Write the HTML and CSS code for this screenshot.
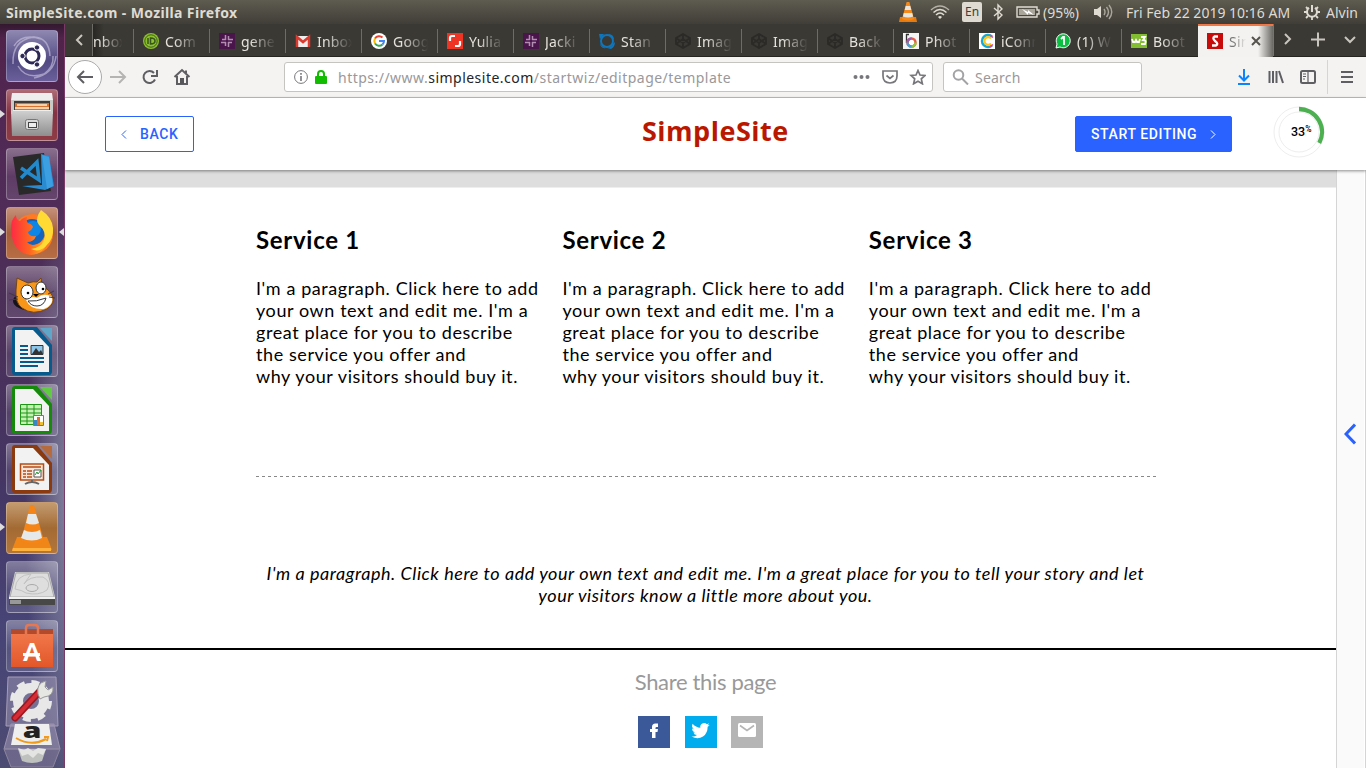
FILE: index.html
```html
<!DOCTYPE html>
<html lang="en">
<head>
<meta charset="utf-8">
<title>SimpleSite.com</title>
<link rel="stylesheet" href="styles.css">
</head>
<body>
<header class="topbar">
  <span class="wintitle">SimpleSite.com - Mozilla Firefox</span>
  <div class="tray">
    <svg class="t-vlc" width="20" height="22" viewBox="0 0 20 22"><path d="M2 16h16l1 5H1z" fill="#e87a0c"/><path d="M8.6 1h2.8L16 18q-6 3-12 0z" fill="#f58a1b"/><path d="M7.700 5h4.600l1 4H6.700zM5.800 12h8.400l.9 3.500q-5 2-10.200 0z" fill="#e9e6df"/></svg>
    <svg class="t-wifi" width="20" height="16" viewBox="0 0 20 16" fill="none" stroke="#dfdbd2" stroke-width="1.500"><path d="M1 6q9-8 18 0" stroke="#b5b1a8"/><path d="M3.500 8.500q6.500-6 13 0M6 11q4-4 8 0"/><path d="M8 13q2-2 4 0l-2 2z" fill="#dfdbd2" stroke="none"/></svg>
    <span class="lang">En</span>
    <svg class="t-bt" width="10" height="18" viewBox="0 0 10 18" fill="none" stroke="#dfdbd2" stroke-width="1.400"><path d="M1 5l8 7-4 4V2l4 4-8 7"/></svg>
    <svg class="t-bat" width="24" height="12" viewBox="0 0 24 12"><path d="M1 1h20v3h2v4h-2v3H1z" fill="none" stroke="#dfdbd2" stroke-width="1.400"/><path d="M3 3h16v6H3z" fill="#aaa69c"/><path d="M6 3l6 3V4l6 5-6-2v2z" fill="#fff"/></svg>
    <span class="pct">(95%)</span>
    <svg class="t-vol" width="20" height="16" viewBox="0 0 20 16"><path d="M1 5h3l4-3v12l-4-3H1z" fill="#dfdbd2"/><path d="M11 5q2 3 0 6M13.500 3q4 5 0 10M16 1q5.500 7 0 14" fill="none" stroke="#aaa69c" stroke-width="1.400"/></svg>
    <span class="clock">Fri Feb 22 2019 10:16 AM</span>
    <svg class="t-gear" width="16" height="16" viewBox="0 0 16 16" fill="none" stroke="#dfdbd2"><path d="M5 3.800a5 5 0 1 0 6 0" stroke-width="2"/><path d="M8 1v7" stroke-width="2"/><path d="M2 3l2 2M14 3l-2 2M0 8h3M13 8h3M2 14l2-2M14 14l-2-2M8 13v3" stroke-width="1.800"/></svg>
    <span class="user">Alvin</span>
  </div>
</header>
<div class="desktop">
<nav class="launcher">
  <div class="tile ubuntu"><svg viewBox="0 0 52 52"><g fill="none" stroke="#c6c0dc" stroke-width="1.500" opacity=".65"><path d="M7 34Q6 10 28 7q15 1 16 19M8 16q8-13 27-7M12 36q8 14 26 8 10-7 9-18M28 48q20-4 22-22"/></g><circle cx="26" cy="26" r="14" fill="#fff"/><circle cx="26" cy="26" r="7" fill="none" stroke="#2d2856" stroke-width="3"/><g fill="#2d2856" stroke="#fff"><circle cx="16.500" cy="26" r="2.700"/><circle cx="31" cy="17.500" r="2.700"/><circle cx="31" cy="34.500" r="2.700"/></g></svg></div>
  <div class="tile files"><svg viewBox="0 0 52 52"><path d="M6 4h40l1 7H5z" fill="#eee"/><path d="M5 11h42v14H5z" fill="#c9c9c7"/><path d="M8 12h36v10H8z" fill="#403b36"/><path d="M9 14h34v8H9z" fill="#d77230"/><path d="M11 15h30v2H11zM9 18h34v2H9z" fill="#f6d0a8"/><path d="M7 21h38v4H7z" fill="#eee"/><path d="M5 22h42l-1 25H6z" fill="url(#metal)"/><rect x="19.500" y="30.500" width="13" height="10" rx="2" fill="#d9d9d9" stroke="#777"/><rect x="22.500" y="33.500" width="8" height="5" fill="#eee" stroke="#444"/></svg></div>
  <div class="tile"><svg viewBox="0 0 52 52"><path d="M7 9l31-4 7 38-32 4z" fill="#292929"/><path d="M35 6l8 2 5 30-9 4-23-4 20-1z" fill="#2b8bd1"/><path d="M36 7l7 2 4 29-6 3z" fill="#3c9fe2"/><path d="M15 20l18 12-2-18-16 16" fill="none" stroke="#2489ca" stroke-width="3.500"/></svg></div>
  <div class="tile firefox"><svg viewBox="0 0 52 52"><circle cx="27" cy="27" r="20" fill="#ff7a22"/><circle cx="26" cy="25" r="13" fill="#1464bd"/><circle cx="27" cy="22" r="8" fill="#0d86e8"/><path d="M5 22Q5 12 10 8q0 5 4 6 2-3 7-4-1 4 1 6 4 1 5 4-1 3-5 5 1 5 8 4-2 6-9 6 5 6 13 1 8-5 5-16 5 8 3 14-4 13-17 14Q6 46 5 22z" fill="url(#flame)"/><path d="M35 3q-7 9-2 15 8 7 5 15-3 8-13 9 8 4 15-3 8-7 7-18-1-11-12-18z" fill="#ffda35"/></svg></div>
  <div class="tile"><svg viewBox="0 0 52 52"><g transform="translate(-2 1)"><ellipse cx="29" cy="34" rx="20" ry="10" fill="#17131c"/><path d="M13 11l11 5q6-2 9-1l4-4 1 8q7 3 10 9 4 8-5 14-14 7-25-1-7-5-6-18z" fill="#f79618" stroke="#70451e"/><path d="M22 33q6-5 11-2 7-6 15-1 2 8-8 12-14 1-18-9z" fill="#fff"/><ellipse cx="23" cy="25" rx="6" ry="7" fill="#fff" stroke="#333"/><ellipse cx="37" cy="21" rx="5" ry="6" fill="#fff" stroke="#333"/><circle cx="24" cy="26" r="1.300"/><circle cx="39" cy="22" r="1.300"/><path d="M29 27h6l-3 3z"/><path d="M24 34q8 1 18-3-2 8-9 8-6 0-9-5z" fill="#fff" stroke="#333"/><path d="M5 26l9 4M5 33l9-1M50 24l-6 3M51 31l-6-1" stroke="#423a45"/></g></svg></div>
  <div class="tile"><svg viewBox="0 0 52 52"><path d="M9 2h22l15 18v26q0 4-3 4H9q-3 0-3-3V5q0-3 3-3z" fill="#075a8c"/><path d="M9 5h18l16 17v25H9z" fill="#f2f2f2"/><path d="M34 3h12v13z" fill="#5fa6c9"/><path d="M14 21h8M14 25h8M14 29h8M14 33h24M14 37h24M14 41h18" stroke="#075a8c" stroke-width="2"/><path d="M25 20.500h12v9H25z" fill="#8bc5e9" stroke="#333"/><path d="M26 29l4-6 3 4 2-2 2 4z" fill="#333"/></svg></div>
  <div class="tile"><svg viewBox="0 0 52 52"><path d="M9 2h22l15 18v26q0 4-3 4H9q-3 0-3-3V5q0-3 3-3z" fill="#158a0a"/><path d="M9 5h18l16 17v25H9z" fill="#f2f2f2"/><path d="M34 3h12v13z" fill="#60ca43"/><path d="M14.500 20.500h21v20h-21zM14.500 25h21M14.500 29h21M14.500 33h21M14.500 37h21M21 20v20M28 20v20" fill="#c5f2b3" stroke="#1d9614"/><path d="M27.500 31.500h10v10h-10z" fill="#fff" stroke="#777"/><path d="M28 36h3v5h-3z" fill="#3887c2"/><path d="M31 33h3v8h-3z" fill="#e36d2d"/><path d="M34 38h3v3h-3z" fill="#ecc035"/></svg></div>
  <div class="tile"><svg viewBox="0 0 52 52"><path d="M9 2h22l15 18v26q0 4-3 4H9q-3 0-3-3V5q0-3 3-3z" fill="#8b3a10"/><path d="M9 5h18l16 17v25H9z" fill="#f2f2f2"/><path d="M34 3h12v13z" fill="#b56b3d"/><path d="M14.500 21h23v16h-23z" fill="#f8e5d8" stroke="#b44e16" stroke-width="1.500"/><path d="M17 24h18M17 28h3M21 28h5M17 31h3M21 31h5M17 34h3M21 34h5" stroke="#b44e16" stroke-width="1.500"/><path d="M28 27h7v7h-7z" fill="#fff" stroke="#555"/><path d="M29 32l2-3 1 2 3-4" fill="none" stroke="#239b34"/><path d="M26 37v3m-7 1q7-4 14 0" fill="none" stroke="#666" stroke-width="2"/></svg></div>
  <div class="tile vlc"><svg viewBox="0 0 52 52"><path d="M11 35h30l5 13H6z" fill="#ef8617"/><path d="M7 46h38v3H6z" fill="#ffb33e"/><path d="M24 3h4l10 36q-11 6-23 0z" fill="#f48516"/><path d="M22 12h8l3 9q-6 3-13 0zM18 28q8 4 16 0l2 8q-10 5-21 0z" fill="#e5e9e9"/></svg></div>
  <div class="tile"><svg viewBox="0 0 52 52"><path d="M9 11h34l6 25v8H3v-8z" fill="#cecece"/><path d="M10 12h32l6 24H4z" fill="#dedede" stroke="#aaa"/><path d="M3 36h46v8H3z" fill="#484848"/><path d="M3 36h46v2H3z" fill="#f1f1f1"/><path d="M4 39h11v4H4z" fill="#999"/><path d="M9 28q1-14 16-15-5 7-7 10 5-8 19-7 9 5 4 13-8 6-21 3-4-3-11-4z" fill="none" stroke="#c2c2c2"/><ellipse cx="26" cy="27" rx="6" ry="3.500" fill="#ddd" stroke="#aaa"/></svg></div>
  <div class="tile"><svg viewBox="0 0 52 52"><path d="M5 9h42v5H5z" fill="#b34a2c"/><path d="M5 14h42v33H5z" fill="url(#bag)"/><path d="M20 17V8q0-3 3-3h6q3 0 3 3v9" fill="none" stroke="#e77751" stroke-width="2.500"/><text x="26" y="41" text-anchor="middle" class="bagletter">A</text><path d="M17 34.500h17" stroke="#fff" stroke-width="3"/></svg></div>
  <svg class="stack" width="65" height="96" viewBox="0 0 65 96"><path d="M8 5h48l2 49H6z" fill="#b6aec8" fill-opacity=".4" stroke="#a69db7"/><circle cx="31" cy="29" r="13" fill="none" stroke="#e7e8e7" stroke-width="10"/><circle cx="31" cy="29" r="19" fill="none" stroke="#e7e8e7" stroke-width="4" stroke-dasharray="8 6.900"/><path d="M15 46l25-27" stroke="#9d1820" stroke-width="7" stroke-linecap="round"/><path d="M15 46l24-26" stroke="#d52c35" stroke-width="4" stroke-linecap="round"/><path d="M38 22q-2-11 8-13l-1 6 3 3 5-3q1 9-9 10l-4 2z" fill="#e6e6e3" stroke="#999"/><path d="M11 52h43l6 25H4z" fill="#aaa0bc" fill-opacity=".5" stroke="#9b93ae"/><path d="M15 52h34l3 21H11z" fill="#eee"/><text transform="translate(32 66) scale(1.200 .85)" text-anchor="middle" class="amazon">a</text><path d="M16 66q15 9 30 1m-2-2l4 0-1 4" fill="none" stroke="#f29a1c" stroke-width="2"/><path d="M4 77h56l-7 18H11z" fill="#8b819f" fill-opacity=".5" stroke="#8d859c"/><path d="M18 77h28l-4 12q-10 4-20 0z" fill="#bfc1bf"/><path d="M18 76l6 2 4-2 5 3 5-3 8 1-3 6-5-2-5 5-5-4-6 2z" fill="#e4e4e2"/></svg>
  <i class="run r1"></i><i class="run r2"></i><i class="run r3"></i><i class="focus"></i>
</nav>
<div class="browser">
  <div class="tabs">
    <div class="scroll"><svg width="8" height="12" viewBox="0 0 8 12"><path d="M7 1L2 6l5 5"/></svg></div>
    <div class="tab clipped"><span class="label">nbox</span></div>
    <div class="tab"><svg class="fav" viewBox="0 0 16 16"><circle cx="8" cy="8" r="8" fill="#8dbf2e"/><circle cx="8" cy="8" r="6.200" fill="none" stroke="#3c611a"/><path d="M5 5v6M7.500 5v6q4.500 0 4.500-3T7.500 5z" fill="none" stroke="#36561b" stroke-width="1.500"/></svg><span class="label">Com</span></div>
    <div class="tab"><svg class="fav" viewBox="0 0 16 16"><path d="M0 0h16v16H0z" fill="#4a154b"/><path d="M6.500 2v5M9.500 9v5M2 9.500h5M9 6.500h5M6.500 9v4M9.500 3v4M3 6.500h4M9 9.500h4" stroke="#b48eb2" stroke-width="1.500"/></svg><span class="label">gene</span></div>
    <div class="tab"><svg class="fav" viewBox="0 0 16 16"><path d="M1 3h14v11H1z" fill="#eee"/><path d="M2 14V4l6 5 6-5v10" fill="none" stroke="#d93b30" stroke-width="2.500"/></svg><span class="label">Inbox</span></div>
    <div class="tab"><svg class="fav" viewBox="0 0 16 16"><circle cx="8" cy="8" r="8" fill="#fff"/><g fill="none" stroke-width="2"><path d="M4 5.500A5 5 0 0 1 11.500 4.500" stroke="#ea4335"/><path d="M4 10.500a5 5 0 0 1 0-5" stroke="#fbbc05"/><path d="M4 10.500a5 5 0 0 0 7.500 1" stroke="#34a853"/><path d="M11.500 11.500Q13 10 13 8H8" stroke="#4285f4"/></g></svg><span class="label">Goog</span></div>
    <div class="tab"><svg class="fav" viewBox="0 0 16 16"><path d="M0 0h16v16H0z" fill="#ee3424"/><path d="M3 8V5q0-2 2-2h3M8 13h3q2 0 2-2V8" fill="none" stroke="#fff" stroke-width="2.200"/></svg><span class="label">Yulia</span></div>
    <div class="tab"><svg class="fav" viewBox="0 0 16 16"><path d="M0 0h16v16H0z" fill="#4a154b"/><path d="M6.500 2v5M9.500 9v5M2 9.500h5M9 6.500h5M6.500 9v4M9.500 3v4M3 6.500h4M9 9.500h4" stroke="#b48eb2" stroke-width="1.500"/></svg><span class="label">Jacki</span></div>
    <div class="tab"><svg class="fav" viewBox="0 0 16 16"><circle cx="8" cy="8" r="6" fill="none" stroke="#0e76bd" stroke-width="2"/><path d="M0 1h5L1 6zM9 1q6 0 6 6l-4-4zM16 9q0 5-4 7l-4-1q5-1 6-4zM1 9q0 4 6 6-6 1-6-6z" fill="#0e76bd"/></svg><span class="label">Stan</span></div>
    <div class="tab"><svg class="fav dark" viewBox="0 0 16 16"><path d="M8 1l7 4v6l-7 4-7-4V5zM1 5l7 5 7-5M1 11l7-5 7 5M8 1v5M8 10v5"/></svg><span class="label">Imag</span></div>
    <div class="tab"><svg class="fav dark" viewBox="0 0 16 16"><path d="M8 1l7 4v6l-7 4-7-4V5zM1 5l7 5 7-5M1 11l7-5 7 5M8 1v5M8 10v5"/></svg><span class="label">Imag</span></div>
    <div class="tab"><svg class="fav dark" viewBox="0 0 16 16"><path d="M8 1l7 4v6l-7 4-7-4V5zM1 5l7 5 7-5M1 11l7-5 7 5M8 1v5M8 10v5"/></svg><span class="label">Back</span></div>
    <div class="tab"><svg class="fav" viewBox="0 0 16 16"><path d="M0 0h16v16H0z" fill="#f4f4f4"/><path d="M3.500 1v9M3 1.500h3" stroke="#333" stroke-width="1.300"/><circle cx="8.500" cy="9.500" r="4" fill="#fff" stroke="#e85c47" stroke-width="2.500"/><path d="M4.500 9.500a4 4 0 0 1 4-4" fill="none" stroke="#975fb2" stroke-width="2.500"/><path d="M4.500 9.500a4 4 0 0 0 4 4" fill="none" stroke="#42a0d4" stroke-width="2.500"/><path d="M8.500 13.500a4 4 0 0 0 4-4" fill="none" stroke="#8dc63f" stroke-width="2.500"/></svg><span class="label">Phot</span></div>
    <div class="tab"><svg class="fav" viewBox="0 0 16 16"><path d="M0 0h16v16H0z" fill="#fff"/><path d="M13 3.500A6 6 0 1 0 13 12.500" fill="none" stroke="#15a8d4" stroke-width="2.500"/><path d="M12 5.500a3.800 3.800 0 1 0 0 5" fill="none" stroke="#ffc51b" stroke-width="2.200"/><path d="M11 2l3 2.500M11 14l3-2.500" stroke="#dd478f" stroke-width="1.500"/></svg><span class="label">iConn</span></div>
    <div class="tab"><svg class="fav" viewBox="0 0 16 16"><path d="M1 15l1-4a7 7 0 1 1 3 3z" fill="#0abf42" stroke="#fff"/><path d="M6 6l2-2h1v8" fill="none" stroke="#fff" stroke-width="1.800"/></svg><span class="label">(1) W</span></div>
    <div class="tab"><svg class="fav" viewBox="0 0 16 16"><path d="M0 1h16v14H0z" fill="#83be31"/><path d="M1 6l1 3h2l1-2 1 2h2l1-3M10 4h4l-2 3q4 0 2 4h-4" fill="none" stroke="#fff" stroke-width="1.800"/></svg><span class="label">Boot</span></div>
    <div class="tab active"><svg class="fav" viewBox="0 0 16 16"><path d="M0 0h16v16H0z" fill="#c70b0b"/><path d="M11 3.500H7.500Q5 5 8 8q4 3 1 4.500H5" fill="none" stroke="#fff" stroke-width="2.300"/></svg><span class="label">Sim</span><svg class="close" width="10" height="10" viewBox="0 0 10 10"><path d="M1 1l8 8M9 1L1 9"/></svg></div>
    <div class="tabctl"><svg viewBox="0 0 70 20" width="70" height="20"><path d="M2 4l5 5-5 5M28 9.500h14M35 2.500v14M62 7l5 5 5-5"/></svg></div>
  </div>
  <div class="toolbar">
    <div class="backbtn"><svg width="18" height="16" viewBox="0 0 18 16"><path d="M17 8H2M8 2L2 8l6 6"/></svg></div>
    <svg class="fwd" width="18" height="16" viewBox="0 0 18 16"><path d="M1 8h15M10 2l6 6-6 6"/></svg>
    <svg class="reload" width="16" height="16" viewBox="0 0 16 16"><path d="M13 10.500A6 6 0 1 1 12 4M15 1v6H9"/></svg>
    <svg class="home" width="18" height="18" viewBox="0 0 18 18"><path d="M1.500 9L9 2l7.500 7M4 8v8h10V8M13 2.500V5"/><path d="M7 10h4v6H7z" fill="#57565a" stroke="none"/></svg>
    <div class="urlbar">
      <svg class="info" width="14" height="14" viewBox="0 0 14 14"><circle cx="7" cy="7" r="6.400"/><path d="M7 6v5M7 3v1.800" stroke-width="1.600"/></svg>
      <svg class="lock" width="12" height="14" viewBox="0 0 12 14"><path d="M3 7V4q0-3 3-3t3 3v3" fill="none" stroke="#12bc00" stroke-width="2"/><rect y="6" width="12" height="8" rx="1" fill="#12bc00"/></svg>
      <span class="url">https://www.<b>simplesite.com</b>/startwiz/editpage/template</span>
      <svg class="urlicons" width="74" height="16" viewBox="0 0 74 16"><g class="dots"><circle cx="3.500" cy="8" r="2"/><circle cx="9.500" cy="8" r="2"/><circle cx="15.500" cy="8" r="2"/></g><path d="M31 2h14v5q0 6.500-7 7-7-.5-7-7zM34.500 6.500l3.500 3 3.500-3"/><path d="M66 1.500l2 4.500 5 .5-3.700 3.400 1.100 4.900-4.400-2.500-4.400 2.500 1.100-4.900L59 6.500l5-.5z"/></svg>
    </div>
    <div class="search"><svg width="17" height="16" viewBox="0 0 17 16"><circle cx="6.500" cy="6" r="4.800"/><path d="M10 9.500l6 6"/></svg><span>Search</span></div>
    <div class="actions">
      <svg width="14" height="16" viewBox="0 0 14 16"><path d="M7 0v11M2 6.500l5 5 5-5M1 15h12"/></svg>
      <svg width="16" height="16" viewBox="0 0 16 16"><path d="M1.500 2v12M5 2v12M8.500 2v12M11 2l4 12"/></svg>
      <svg width="16" height="14" viewBox="0 0 16 14"><rect x="1" y="1" width="14" height="12" rx="1.500"/><path d="M8 1v12M3 4h3M3 6.500h3M3 9h2" stroke-width="1.200"/></svg>
    </div>
    <div class="menu"><svg width="12" height="12" viewBox="0 0 12 12"><path d="M0 1h12M0 6h12M0 11h12"/></svg></div>
  </div>
  <div class="sitebar">
    <a class="btn back"><svg width="6" height="9" viewBox="0 0 6 9"><path d="M5 .5l-4 4 4 4"/></svg><span>BACK</span></a>
    <div class="logo">SimpleSite</div>
    <a class="btn start"><span>START EDITING</span><svg width="6" height="9" viewBox="0 0 6 9"><path d="M1 .5l4 4-4 4"/></svg></a>
    <div class="progress"><svg width="52" height="52" viewBox="0 0 52 52"><circle cx="26" cy="26" r="25" fill="none" stroke="#eee"/><circle cx="26" cy="26" r="20" fill="none" stroke="#eee"/><path d="M26 3A23 23 0 0 1 46.200 37" fill="none" stroke="#4caf50" stroke-width="4.300"/></svg><span class="num">33<sup>%</sup></span></div>
  </div>
  <div class="work">
    <main class="canvas">
      <div class="band"></div>
      <section class="services">
        <article><h2>Service 1</h2><p>I'm a paragraph. Click here to add<br>your own text and edit me. I'm a<br>great place for you to describe<br>the service you offer and<br>why your visitors should buy it.</p></article>
        <article><h2>Service 2</h2><p>I'm a paragraph. Click here to add<br>your own text and edit me. I'm a<br>great place for you to describe<br>the service you offer and<br>why your visitors should buy it.</p></article>
        <article><h2>Service 3</h2><p>I'm a paragraph. Click here to add<br>your own text and edit me. I'm a<br>great place for you to describe<br>the service you offer and<br>why your visitors should buy it.</p></article>
      </section>
      <div class="dash"></div>
      <p class="story">I'm a paragraph. Click here to add your own text and edit me. I'm a great place for you to tell your story and let<br>your visitors know a little more about you.</p>
      <footer class="share">
        <h3>Share this page</h3>
        <div class="social">
          <span class="fb"><svg viewBox="0 0 32 32"><path d="M14 22v-6h-2v-3h2v-2q0-3.500 3.500-3.500H20V11h-1.500q-1 0-1 1v1H20l-.5 3h-2v6z"/></svg></span>
          <span class="tw"><svg viewBox="0 0 24 24"><path d="M18.500 6.500q-.8.400-1.600.500.900-.6 1.200-1.500-.8.500-1.700.7a2.900 2.900 0 0 0-4.900 2.600q-3.400-.2-5.800-3-1.100 2.400.8 3.900-.6 0-1.200-.3 0 2.200 2.200 2.800-.6.200-1.200.1.600 1.900 2.700 2-1.900 1.400-4.100 1.100 4.600 2.600 8.600 0 3.500-2.500 3.500-7.400.9-.5 1.500-1.500z"/></svg></span>
          <span class="ml"><svg viewBox="0 0 32 32"><rect x="7" y="7" width="18" height="14" rx="1.500"/><path d="M9 9.500l7 5 7-5" fill="none" stroke="#b5b5b5" stroke-width="1.600"/></svg></span>
        </div>
      </footer>
    </main>
    <aside class="rail"><svg width="12" height="22" viewBox="0 0 12 22"><path d="M11 1.500L2 11l9 9.500"/></svg></aside>
  </div>
</div>
</div>
<svg width="0" height="0" class="defs"><defs>
<linearGradient id="metal" x2="0" y2="1"><stop stop-color="#cfcfcf"/><stop offset="1" stop-color="#8e8e8e"/></linearGradient>
<linearGradient id="flame" x2="1"><stop stop-color="#ff2947"/><stop offset=".5" stop-color="#ff661f"/><stop offset="1" stop-color="#ffc52b"/></linearGradient>
<linearGradient id="bag" x2="0" y2="1"><stop stop-color="#f0774a"/><stop offset="1" stop-color="#e2572a"/></linearGradient>
</defs></svg>
</body>
</html>
```
FILE: styles.css
```css
* { box-sizing: border-box; }
html, body { margin: 0; height: 100%; overflow: hidden; }
body { display: flex; flex-direction: column; width: 1366px; height: 768px; background: #fff; font-family: "Noto Sans", sans-serif; }
svg { display: block; flex: none; }
.defs { position: absolute; }
.topbar { height: 24px; flex: none; display: flex; align-items: center; justify-content: space-between; padding: 0 6px; background: linear-gradient(#5e5b50, #403e38); color: #dfdbd2; font-size: 14px; white-space: nowrap; }
.wintitle { font-weight: 700; font-size: 14px; letter-spacing: .36px; }
.tray { display: flex; align-items: center; }
.t-wifi { margin-left: 12px; }
.lang { width: 20px; height: 20px; margin-left: 12px; background: #dfdbd2; color: #403e38; border-radius: 2px; font-size: 12px; line-height: 20px; text-align: center; }
.t-bt { margin-left: 11px; }
.t-bat { margin-left: 13px; }
.pct { width: 40px; margin-left: 3px; }
.t-vol { margin-left: 10px; }
.clock { width: 165px; margin-left: 13px; }
.t-gear { margin-left: 13px; }
.user { width: 34px; margin-left: 6px; }
.desktop { flex: 1; min-height: 0; display: flex; }

.launcher { position: relative; width: 65px; flex: none; overflow: hidden; padding-top: 6px; display: flex; flex-direction: column; align-items: flex-start; gap: 7px; border-right: 1px solid #7a3a68; background: radial-gradient(ellipse at 70px 480px, #8585a0 0, transparent 45px), linear-gradient(#33182f 0, #50234b 14px, #512b58 150px, #4b3059 300px, #443563 450px, #474476 600px, #4c4b72 744px); }
.tile { width: 52px; height: 52px; margin-left: 6px; flex: none; border-radius: 4px; border: 1px solid rgba(255,255,255,.27); background: linear-gradient(rgba(255,255,255,.33), rgba(255,255,255,.08) 55%, rgba(255,255,255,.12)); }
.tile svg { width: 52px; height: 52px; margin: -1px; }
.ubuntu { background: linear-gradient(#8d87b1, #524a82 60%, #6a5f9a); }
.files { background: linear-gradient(#ad6c76, #843244 45%, #8f3c45); }
.firefox { background: linear-gradient(#c4907a, #a55f3b 50%, #b86d43); }
.vlc { background: linear-gradient(#c39b70, #a36a33 50%, #b2763b); }
.bagletter { font: 900 25px Lato, sans-serif; fill: #fff; }
.amazon { font: 800 25px "Open Sans", sans-serif; fill: #222; }
.stack { margin-top: -7px; }
.run, .focus { position: absolute; border: 4px solid transparent; }
.run { left: 0; border-left: 5px solid #ddd; border-right: 0; }
.focus { right: 0; top: 204px; border-right: 5px solid #ddd; border-left: 0; }
.r1 { top: 86px; } .r2 { top: 204px; } .r3 { top: 499px; }

.browser { flex: 1; min-width: 0; display: flex; flex-direction: column; }
.tabs { height: 33px; flex: none; display: flex; background: #3b3934; border-bottom: 1px solid #252420; }
.scroll { width: 27px; display: flex; align-items: center; justify-content: center; }
.scroll svg, .tabctl svg { fill: none; stroke: #c9c6bf; stroke-width: 2; overflow: visible; }
.tab { position: relative; width: 76px; flex: none; display: flex; align-items: center; padding: 2px 0 0 10px; gap: 6px; }
.tab:not(.active)::before { content: ""; position: absolute; left: 0; top: 5px; width: 1px; height: 24px; background: #6e6c67; }
.tab.clipped { width: 41px; padding-left: 1px; background: linear-gradient(90deg, #262521, #3b3934 12px); }
.tab.clipped::before { top: 0; height: 32px; }
.fav { width: 16px; height: 16px; }
.dark path { fill: none; stroke: #2b2a27; stroke-width: 1.800; }
.label { width: 37px; flex: none; white-space: nowrap; font-size: 14px; letter-spacing: .2px; color: #e5e2dc; -webkit-mask-image: linear-gradient(90deg, #000 25%, transparent 95%); mask-image: linear-gradient(90deg, #000 25%, transparent 95%); }
.clipped .label { width: 31px; }
.tab.active { height: 33px; margin-left: 1px; width: 75px; padding: 0 0 1px 9px; border-top: 2px solid #f07746; background: linear-gradient(90deg, #f3f2f0 60px, #6a6863); }
.active .label { width: 18px; color: #777; }
.close { position: absolute; left: 53px; top: 10px; stroke: #55534f; stroke-width: 2; }
.tabctl { flex: 1; display: flex; align-items: center; padding-left: 9px; border-left: 1px solid #77756f; }
.toolbar { height: 41px; flex: none; display: flex; align-items: center; background: #f4f3f2; border-bottom: 1px solid #c3c1bd; }
.toolbar svg { fill: none; stroke: #5f5e62; stroke-width: 2; }
.backbtn { width: 34px; height: 34px; margin-left: 3px; border: 1px solid #aaa; border-radius: 50%; background: #fff; display: grid; place-items: center; }
.toolbar .fwd { margin-left: 7px; stroke: #b5b4b3; }
.reload { margin-left: 15px; }
.home { margin-left: 15px; }
.urlbar, .search { height: 30px; background: #fff; border: 1px solid #c6c4c0; border-radius: 3px; display: flex; align-items: center; white-space: nowrap; font-size: 14px; color: #99989b; }
.urlbar { width: 649px; margin-left: 93px; padding-left: 9px; }
.toolbar .info { stroke: #77767a; stroke-width: 1; }
.toolbar .lock { margin-left: 7px; stroke: none; }
.url { width: 400px; margin-left: 11px; letter-spacing: .48px; }
.url b { font-weight: 400; color: #242327; }
.toolbar .urlicons { margin-left: auto; margin-right: 6px; stroke: #77767a; stroke-width: 1.700; }
.dots { fill: #77767a; stroke: none; }
.search { width: 199px; margin-left: 10px; padding-left: 8px; gap: 6px; letter-spacing: .2px; }
.toolbar .search svg { stroke: #a3a2a5; }
.actions { display: flex; align-items: center; gap: 17px; margin-left: 95px; }
.actions svg + svg + svg { margin-left: -1px; }
.toolbar .actions svg:first-child { stroke: #0a84ff; }
.menu { align-self: stretch; display: flex; align-items: center; margin: 3px 0 3px 11px; padding-left: 13px; border-left: 1px solid #d6d5d3; }

.sitebar { position: relative; z-index: 1; height: 72px; flex: none; display: flex; align-items: center; background: #fff; box-shadow: 0 1px 3px rgba(0,0,0,.45); }
.btn { height: 36px; display: flex; align-items: center; border: 1px solid #2962ff; border-radius: 2px; font: 500 14px Roboto, sans-serif; letter-spacing: .6px; color: #2962ff; white-space: nowrap; }
.btn svg { fill: none; stroke: currentColor; stroke-width: 1; }
.back { width: 89px; margin-left: 40px; padding-left: 15px; gap: 13px; }
.logo { width: 148px; margin-left: 448px; margin-top: -7px; color: #ba1700; font: 700 27px "Open Sans", sans-serif; letter-spacing: .5px; white-space: nowrap; }
.start { width: 157px; margin-left: 285px; padding-left: 15px; gap: 13px; background: #2962ff; color: #fff; }
.progress { position: relative; width: 52px; height: 52px; margin: -4px 0 0 41px; }
.num { position: absolute; left: 18px; top: 18px; font: 500 12.500px/16px Roboto, sans-serif; color: #000; white-space: nowrap; }
.num sup { font-size: 8.500px; line-height: 0; vertical-align: 4px; }
.work { flex: 1; min-height: 0; display: flex; }
.canvas { flex: 1; min-width: 0; font-family: Lato, sans-serif; color: #000; }
.band { height: 18px; background: #dedede; border-bottom: 1px solid #eee; }
.services { display: grid; grid-template-columns: repeat(3, 306.400px); margin-left: 191px; padding-top: 37px; height: 288px; }
.services h2 { margin: 0; font-size: 24px; line-height: 29px; letter-spacing: .7px; font-weight: 700; }
.services p { margin: 23px 0 0; font-size: 18px; line-height: 22px; letter-spacing: .58px; white-space: nowrap; }
.dash { width: 900px; height: 1px; margin-left: 191px; background: repeating-linear-gradient(90deg, #888 0 3px, transparent 3px 5.980px); }
.story { margin: 85px 0 0; width: 1281px; height: 86px; text-align: center; font-size: 18px; font-style: italic; line-height: 22px; letter-spacing: .545px; white-space: nowrap; }
.share { border-top: 2px solid #000; display: flex; flex-direction: column; align-items: center; width: 1271px; }
.share h3 { margin: 18px 0 0 10px; font-weight: 400; font-size: 22px; line-height: 28px; letter-spacing: -.33px; color: #999; }
.social { display: flex; gap: 15px; margin: 20px 0 0 0; }
.social span { width: 32px; height: 32px; }
.social .ml { margin-left: -1px; }
.social svg { width: 32px; height: 32px; fill: #fff; }
.fb { background: #3b5998; } .tw { background: #00aced; } .ml { background: #b5b5b5; }
.rail { width: 30px; flex: none; display: flex; align-items: center; padding-left: 7px; padding-bottom: 70px; background: #fafafa; border: solid #d5d5d5; border-width: 0 1px 0 1px; box-shadow: inset -1px 0 #fff; }
.rail svg { fill: none; stroke: #2962ff; stroke-width: 3; }
```
